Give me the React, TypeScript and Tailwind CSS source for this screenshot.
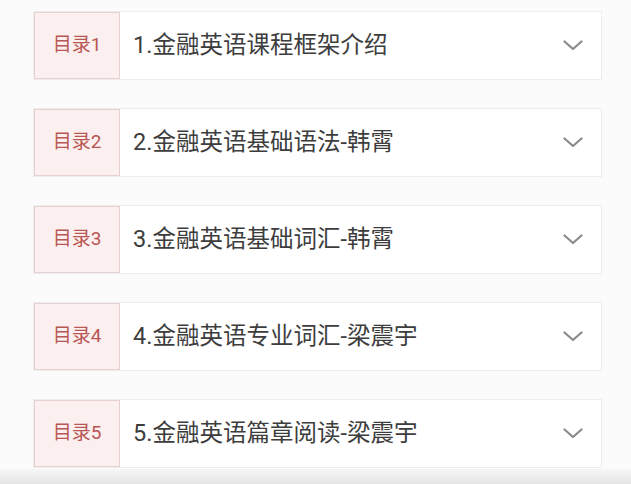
import React from 'react';

const items = [
  '1.金融英语课程框架介绍',
  '2.金融英语基础语法-韩霄',
  '3.金融英语基础词汇-韩霄',
  '4.金融英语专业词汇-梁震宇',
  '5.金融英语篇章阅读-梁震宇',
];

const Chevron = () => (
  <svg width="20" height="11" viewBox="0 0 20 11" fill="none">
    <polyline points="1.5,1.5 10,9 18.5,1.5" stroke="#8a8a8a" strokeWidth="2.2" strokeLinecap="round" strokeLinejoin="round" />
  </svg>
);

const App = () => {
  return (
    <div
      className="w-[631px] h-[484px] overflow-hidden bg-[#fcfbfb] flex flex-col"
      style={{ fontFamily: 'Roboto, "Noto Sans CJK SC", sans-serif' }}
    >
      <div className="flex flex-col gap-[28px] pt-[11px] pl-[33px] pr-[29px]">
        {items.map((title, i) => (
          <div key={i} className="flex items-stretch h-[69px] bg-white border border-[#eeeded]">
            <div className="w-[86px] shrink-0 flex items-center justify-center bg-[#fbefef] border border-[#e6d0d0] text-[19px] text-[#b95754]">
              目录{i + 1}
            </div>
            <div className="flex-1 flex items-center pl-[13px] pt-[1px] text-[23.5px] text-[#3d3d3d]">
              {title}
            </div>
            <div className="flex items-center pr-[18px]">
              <Chevron />
            </div>
          </div>
        ))}
      </div>
      <div className="mt-auto h-[15px] bg-gradient-to-b from-[#f6f6f6] to-[#e4e4e4]" />
    </div>
  );
};

export default App;
